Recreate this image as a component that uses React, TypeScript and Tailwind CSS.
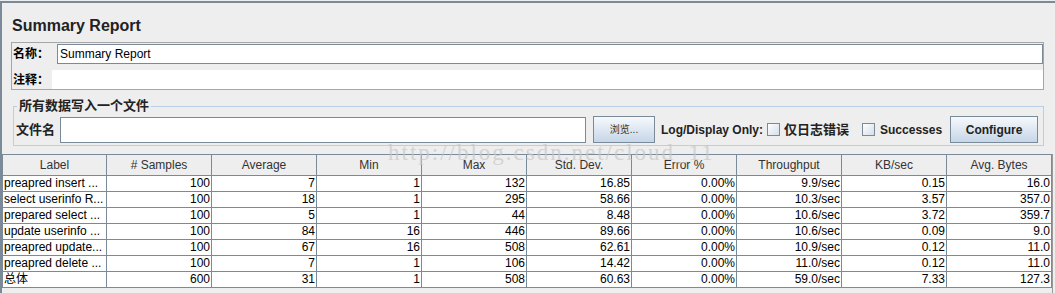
import React from "react";

const cols = [
  "Label",
  "# Samples",
  "Average",
  "Min",
  "Max",
  "Std. Dev.",
  "Error %",
  "Throughput",
  "KB/sec",
  "Avg. Bytes",
];

const rows = [
  ["preapred insert ...", "100", "7", "1", "132", "16.85", "0.00%", "9.9/sec", "0.15", "16.0"],
  ["select userinfo R...", "100", "18", "1", "295", "58.66", "0.00%", "10.3/sec", "3.57", "357.0"],
  ["prepared select ...", "100", "5", "1", "44", "8.48", "0.00%", "10.6/sec", "3.72", "359.7"],
  ["update userinfo ...", "100", "84", "16", "446", "89.66", "0.00%", "10.6/sec", "0.09", "9.0"],
  ["preapred update...", "100", "67", "16", "508", "62.61", "0.00%", "10.9/sec", "0.12", "11.0"],
  ["preapred delete ...", "100", "7", "1", "106", "14.42", "0.00%", "11.0/sec", "0.12", "11.0"],
  ["总体", "600", "31", "1", "508", "60.63", "0.00%", "59.0/sec", "7.33", "127.3"],
];

function Checkbox() {
  return (
    <span className="inline-block h-[13px] w-[13px] shrink-0 border border-[#7a8a99] bg-gradient-to-br from-white to-[#d4deea]" />
  );
}

export default function App() {
  return (
    <div className="relative h-[293px] w-[1055px] overflow-hidden bg-[#eeeeee] pt-px font-['Liberation_Sans','Noto_Sans_CJK_SC',sans-serif] text-[12px] text-black">
      <div className="h-full border-l-2 border-t-2 border-[#7a8a99]">
        {/* title */}
        <div className="h-[39px] pl-[10px] pt-[13px] text-[16px] leading-[20px] font-bold text-[#222]">
          Summary Report
        </div>

        {/* name / comment panel */}
        <div className="ml-[9px] h-[48px] w-[1033px] border border-[#a6a6a6]">
          <div className="flex h-[22px] items-center">
            <span className="w-[45px] pl-px text-[12px] font-bold">名称：</span>
            <div className="flex h-[20px] w-[986px] items-center border border-[#7a8a99] bg-white pl-[2px] text-[12px]">
              Summary Report
            </div>
          </div>
          <div className="mt-[5px] flex h-[19px] items-center">
            <span className="w-[40px] pl-px text-[12px] font-bold">注释：</span>
            <div className="h-[19px] flex-1 bg-white" />
          </div>
        </div>

        {/* write to file */}
        <fieldset className="ml-[11px] mt-[8px] w-[1031px] border border-[#b8cfe5] px-[2px] pb-[2px]">
          <legend className="ml-[1px] px-[2px] text-[13px] leading-[16px] font-bold text-[#222]">
            所有数据写入一个文件
          </legend>
          <div className="mt-[2px] flex h-[27px] items-center whitespace-nowrap">
            <span className="w-[44px] shrink-0 text-[13px] font-bold text-[#222]">文件名</span>
            <div className="h-[26px] w-[526px] shrink-0 border border-[#7a8a99] bg-white" />
            <button className="ml-[7px] h-[27px] w-[62px] shrink-0 border border-[#7a8a99] bg-gradient-to-b from-[#f6f9fc] to-[#c6d6e8] text-[10px] text-[#333]">
              浏览...
            </button>
            <span className="ml-[6px] shrink-0 text-[12px] font-bold text-[#222]">Log/Display Only:</span>
            <span className="ml-[4px] flex shrink-0">
              <Checkbox />
            </span>
            <span className="ml-[4px] shrink-0 text-[13px] font-bold text-[#222]">仅日志错误</span>
            <span className="ml-[13px] flex shrink-0">
              <Checkbox />
            </span>
            <span className="ml-[5px] shrink-0 text-[12px] font-bold text-[#222]">Successes</span>
            <button className="ml-[8px] h-[27px] w-[88px] shrink-0 border border-[#7a8a99] bg-gradient-to-b from-[#f6f9fc] to-[#c6d6e8] text-[12px] font-bold text-[#222]">
              Configure
            </button>
          </div>
        </fieldset>

        {/* results table */}
        <div className="mt-[8px] h-[200px] w-[1051px] border-r border-[#9a9a9a]">
          <table className="w-[1050px] table-fixed border-collapse">
            <colgroup>
              <col className="w-[104px]" />
              {cols.slice(1).map((c) => (
                <col key={c} className="w-[105px]" />
              ))}
            </colgroup>
            <thead>
              <tr className="h-[21px]">
                {cols.map((c) => (
                  <th
                    key={c}
                    className="border border-[#7a8a99] bg-[#eeeeee] p-0 text-center text-[12px] leading-[19px] font-normal text-[#333]"
                  >
                    {c}
                  </th>
                ))}
              </tr>
            </thead>
            <tbody>
              {rows.map((r, i) => (
                <tr key={i} className="h-[16px]">
                  {r.map((v, j) => (
                    <td
                      key={j}
                      className={
                        "overflow-hidden whitespace-nowrap border border-[#7a8a99] bg-white p-0 text-[12px] leading-[15px] " +
                        (j === 0 ? "pl-px text-left" : "pr-px text-right")
                      }
                    >
                      {v}
                    </td>
                  ))}
                </tr>
              ))}
            </tbody>
          </table>
        </div>
      </div>

      {/* watermark */}
      <div className="pointer-events-none absolute left-[388px] top-[141px] font-['Liberation_Serif',serif] text-[23px] leading-[24px] tracking-[2px] text-[#c8c8c8] opacity-70">
        http://blog.csdn.net/cloud_11
      </div>
    </div>
  );
}
